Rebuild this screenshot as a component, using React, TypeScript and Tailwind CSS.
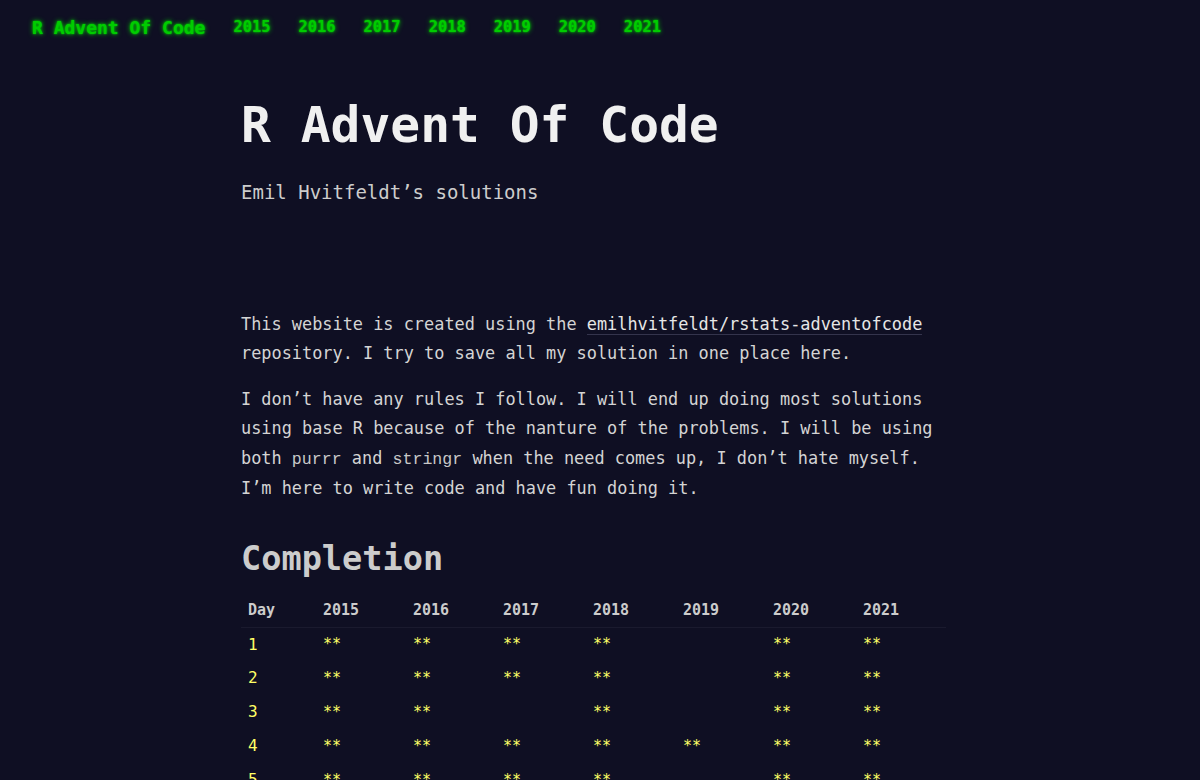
const years = ["2015", "2016", "2017", "2018", "2019", "2020", "2021"];

const rows: { day: number; done: boolean[] }[] = [
  { day: 1, done: [true, true, true, true, false, true, true] },
  { day: 2, done: [true, true, true, true, false, true, true] },
  { day: 3, done: [true, true, false, true, false, true, true] },
  { day: 4, done: [true, true, true, true, true, true, true] },
  { day: 5, done: [true, true, true, true, false, true, true] },
  { day: 6, done: [true, true, true, true, false, true, true] },
];

const mono = "font-['DejaVu_Sans_Mono',monospace]";
const glow = "[text-shadow:0_0_2px_#00cc00,0_0_5px_#00cc00]";

function Code({ children }: { children: string }) {
  return (
    <code className="font-['Liberation_Mono',monospace] text-[16.6px] text-[#c8c8c8]">
      {children}
    </code>
  );
}

export default function App() {
  return (
    <div className={`min-h-[780px] bg-[#0f0f23] text-[#cccccc] ${mono}`}>
      <nav className="flex h-[55px] items-center gap-[28px] pl-8">
        <a className={`text-[18px] font-bold text-[#00cc00] ${glow}`}>R Advent Of Code</a>
        {years.map((y) => (
          <a key={y} className={`text-[15.4px] font-bold text-[#00cc00] ${glow}`}>
            {y}
          </a>
        ))}
      </nav>

      <main className="mx-auto w-[718px] pb-10">
        <h1 className="mt-[40px] text-[49.6px] leading-[60px] font-bold text-[#f0f0f0]">
          R Advent Of Code
        </h1>
        <p className="mt-[23px] text-[19px] leading-[28px] text-[#cccccc]">
          Emil Hvitfeldt’s solutions
        </p>

        <div className="mt-[104px] max-w-[702px] text-[16.9px] leading-[29.3px] text-[#d4d4d4]">
          <p>
            This website is created using the{" "}
            <a className="border-b border-[#34344c] text-[#e6e6e6]">
              emilhvitfeldt/rstats-adventofcode
            </a>{" "}
            repository. I try to save all my solution in one place here.
          </p>
          <p className="mt-[16.5px]">
            I don’t have any rules I follow. I will end up doing most solutions using base R
            because of the nanture of the problems. I will be using both <Code>purrr</Code> and{" "}
            <Code>stringr</Code> when the need comes up, I don’t hate myself. I’m here to write
            code and have fun doing it.
          </p>
        </div>

        <h2 className="mt-[35px] text-[33.6px] leading-[41px] font-bold text-[#cccccc]">
          Completion
        </h2>

        <table className="mt-[14px] border-collapse text-[15px]">
          <thead>
            <tr className="h-[34px] border-b border-[#1a1a2e]">
              <th className="w-[75px] pl-[7px] text-left font-bold text-[#cccccc]">Day</th>
              {years.map((y) => (
                <th key={y} className="w-[90px] pl-[7px] text-left font-bold text-[#cccccc]">
                  {y}
                </th>
              ))}
            </tr>
          </thead>
          <tbody>
            {rows.map((r) => (
              <tr key={r.day} className="h-[34px]">
                <td className="pl-[7px] text-[16px] text-[#ffff66]">{r.day}</td>
                {r.done.map((d, i) => (
                  <td key={i} className="pl-[7px] text-[#ffff66]">
                    {d ? "**" : ""}
                  </td>
                ))}
              </tr>
            ))}
          </tbody>
        </table>
      </main>
    </div>
  );
}
